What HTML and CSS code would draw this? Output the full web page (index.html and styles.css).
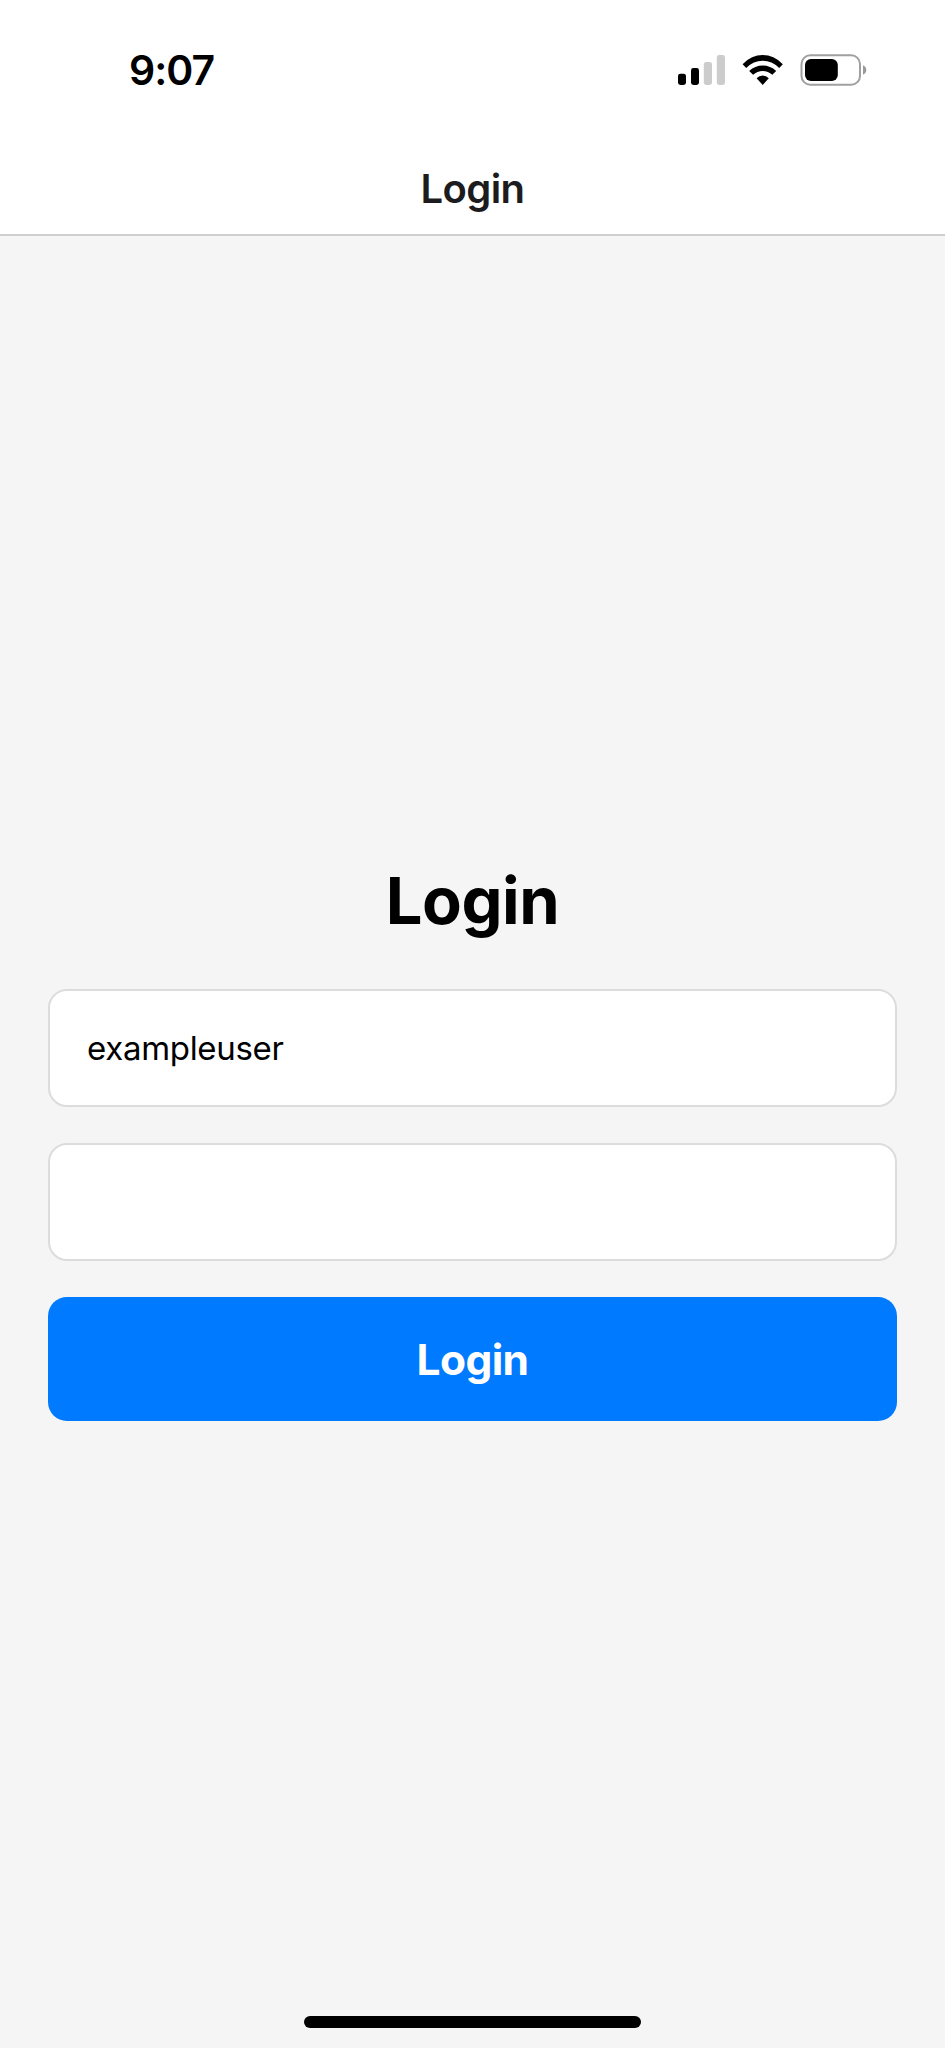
FILE: index.html
```html
<!DOCTYPE html>
<html lang="en">
<head>
<meta charset="utf-8">
<title>Login</title>
<link rel="stylesheet" href="styles.css">
</head>
<body>
<div class="screen">
  <header class="top">
    <div class="status">
      <span class="time">9:07</span>
      <svg class="indicators" width="192" height="34" viewBox="676 53 192 34">
        <g>
          <rect x="678" y="73.7" width="8" height="11.3" rx="2.4"/>
          <rect x="691" y="68" width="8" height="17" rx="2.4"/>
          <rect x="703.8" y="62" width="8.2" height="23" rx="2.4" fill="#ccc"/>
          <rect x="716.8" y="55" width="8.2" height="30" rx="2.4" fill="#ccc"/>
        </g>
        <path d="M742.6 64.2Q751.5 55.1 762.7 55.1Q773.9 55.1 782.8 64.2L779.2 67.9Q772 60.7 762.7 60.7Q753.4 60.7 746.2 67.9Z"/>
        <path d="M749.2 70.9Q755 65.4 762.7 65.4Q770.4 65.4 776.2 70.9L772.3 74.8Q768.2 71 762.7 71Q757.2 71 753.1 74.8Z"/>
        <path d="M756.6 78.3Q759.2 75.6 762.7 75.6Q766.2 75.6 768.8 78.3L762.7 84.9Z"/>
        <rect x="801.5" y="55.3" width="58.5" height="29.4" rx="8.8" fill="none" stroke="#a0a0a0" stroke-width="2"/>
        <rect x="805" y="59" width="32.8" height="22" rx="6"/>
        <path d="M863 65.3Q866.3 66.8 866.3 70Q866.3 73.2 863 74.7Z" fill="#999"/>
      </svg>
    </div>
    <div class="navbar">Login</div>
  </header>
  <main class="content">
    <form class="form">
      <h1 class="title">Login</h1>
      <div class="field">exampleuser</div>
      <div class="field"></div>
      <button class="submit" type="button">Login</button>
    </form>
  </main>
  <footer class="bottom"><div class="home"></div></footer>
</div>
</body>
</html>
```
FILE: styles.css
```css
* { box-sizing: border-box; }
body { margin: 0; font-family: Inter, "Liberation Sans", sans-serif; }
.screen {
  width: 945px;
  height: 2048px;
  display: flex;
  flex-direction: column;
  background: #f5f5f5;
  color: #000;
}
.top { height: 236px; background: #fff; border-bottom: 2px solid #cfcfcf; }
.status {
  height: 140px;
  padding: 0 77px 0 129px;
  display: flex;
  align-items: center;
  justify-content: space-between;
}
.time { font-size: 41px; font-weight: 600; letter-spacing: -1px; }
.indicators { display: block; }
.navbar {
  height: 97px;
  line-height: 97px;
  text-align: center;
  font-size: 40px;
  font-weight: 600;
  letter-spacing: -0.6px;
  color: #1c1c1e;
}
.content { flex: 1; padding: 618px 48px 0; }
.form { display: flex; flex-direction: column; }
.title {
  margin: 0 0 41px;
  line-height: 94px;
  text-align: center;
  font-size: 65px;
  font-weight: 700;
  letter-spacing: -0.5px;
}
.field {
  height: 118px;
  margin-bottom: 36px;
  padding: 0 37px;
  border: 2px solid #dcdcdc;
  border-radius: 19px;
  background: #fff;
  font-size: 33px;
  line-height: 114px;
  letter-spacing: -0.3px;
}
.submit {
  height: 124px;
  padding: 0;
  border: 0;
  border-radius: 19px;
  background: #007aff;
  color: #fff;
  font-family: inherit;
  font-size: 42.5px;
  font-weight: 700;
  letter-spacing: -0.6px;
}
.bottom { height: 32px; display: flex; justify-content: center; }
.home { width: 337px; height: 12px; border-radius: 6px; background: #000; }
```
